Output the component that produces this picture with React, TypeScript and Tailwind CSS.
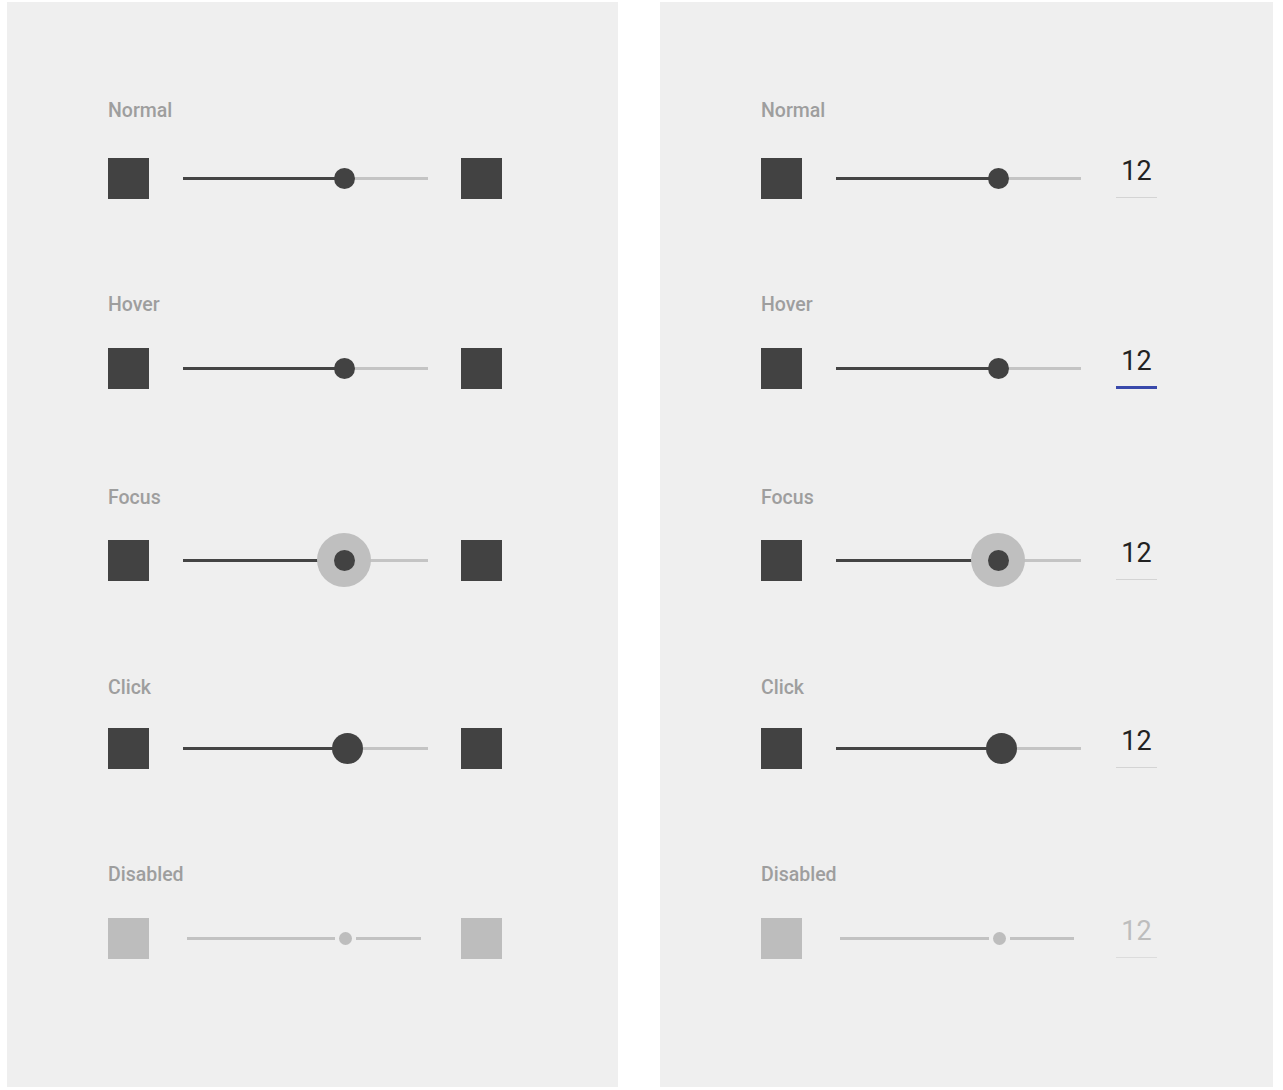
import React from "react";

type State = "normal" | "hover" | "focus" | "click" | "disabled";

const rows: { label: string; state: State; labelMt: string; rowMt: string }[] = [
  { label: "Normal", state: "normal", labelMt: "mt-[97px]", rowMt: "mt-[35px]" },
  { label: "Hover", state: "hover", labelMt: "mt-[94px]", rowMt: "mt-[31px]" },
  { label: "Focus", state: "focus", labelMt: "mt-[97px]", rowMt: "mt-[30px]" },
  { label: "Click", state: "click", labelMt: "mt-[95px]", rowMt: "mt-[28px]" },
  { label: "Disabled", state: "disabled", labelMt: "mt-[94px]", rowMt: "mt-[31px]" },
];

function Square({ disabled }: { disabled: boolean }) {
  return <div className={`w-[41px] h-[41px] shrink-0 ${disabled ? "bg-[#bdbdbd]" : "bg-[#424242]"}`} />;
}

function Track({ state, offset }: { state: State; offset: number }) {
  if (state === "disabled") {
    return (
      <div className="relative w-[245px] h-[41px] shrink-0">
        <div className="absolute left-[4px] top-[19px] h-[3px] bg-[#c2c2c2]" style={{ width: 148 + offset }} />
        <div
          className="absolute w-[13px] h-[13px] top-[14px] rounded-full bg-[#bdbdbd]"
          style={{ left: 156 + offset }}
        />
        <div className="absolute right-[7px] top-[19px] h-[3px] bg-[#c2c2c2]" style={{ left: 173 + offset }} />
      </div>
    );
  }
  const thumbSize =
    state === "click" ? "w-[31px] h-[31px] top-[5px]" : "w-[21px] h-[21px] top-[10px]";
  const thumbLeft = state === "click" ? 149 + offset : 151 + offset;
  return (
    <div className="relative w-[245px] h-[41px] shrink-0">
      <div className="absolute left-0 top-[19px] h-[3px] bg-[#444444]" style={{ width: 161 + offset }} />
      <div className="absolute right-0 top-[19px] h-[3px] bg-[#c4c4c4]" style={{ left: 161 + offset }} />
      {state === "focus" && (
        <div
          className="absolute w-[54px] h-[54px] top-[-7px] rounded-full bg-[#bfbfbf]"
          style={{ left: 134 + offset }}
        />
      )}
      <div className={`absolute rounded-full bg-[#424242] ${thumbSize}`} style={{ left: thumbLeft }} />
    </div>
  );
}

function NumberField({ state }: { state: State }) {
  const disabled = state === "disabled";
  return (
    <div className="w-[41px] h-[41px] shrink-0 flex flex-col">
      <span
        className={`block text-center text-[27px] leading-[27px] mt-0 ${
          disabled ? "text-[#bdbdbd]" : "text-[#222222]"
        }`}
      >
        12
      </span>
      {state === "hover" ? (
        <div className="mt-auto h-[3px] bg-[#3949ab]" />
      ) : (
        <div className={`mt-auto mb-[1px] h-px ${disabled ? "bg-[#dcdcdc]" : "bg-[#d4d4d4]"}`} />
      )}
    </div>
  );
}

function Panel({ variant }: { variant: "squares" | "number" }) {
  const offset = variant === "squares" ? 0 : 1;
  return (
    <div
      className={`bg-[#efefef] h-[1085px] shrink-0 flex flex-col pl-[101px] ${
        variant === "squares" ? "w-[611px]" : "w-[613px]"
      }`}
    >
      {rows.map((r) => (
        <div key={r.label} className="flex flex-col">
          <div className={`${r.labelMt} h-[24px] leading-[24px] text-[19.5px] font-medium text-[#9e9e9e]`}>
            {r.label}
          </div>
          <div className={`${r.rowMt} flex items-center`}>
            <Square disabled={r.state === "disabled"} />
            <div className="ml-[34px]">
              <Track state={r.state} offset={offset} />
            </div>
            <div className={variant === "squares" ? "ml-[33px]" : "ml-[35px]"}>
              {variant === "squares" ? <Square disabled={r.state === "disabled"} /> : <NumberField state={r.state} />}
            </div>
          </div>
        </div>
      ))}
    </div>
  );
}

export default function App() {
  return (
    <div
      className="w-[1283px] h-[1090px] bg-white flex pt-[2px] pl-[7px] gap-[42px] overflow-hidden"
      style={{ fontFamily: "Roboto, 'Noto Sans', sans-serif" }}
    >
      <Panel variant="squares" />
      <Panel variant="number" />
    </div>
  );
}
